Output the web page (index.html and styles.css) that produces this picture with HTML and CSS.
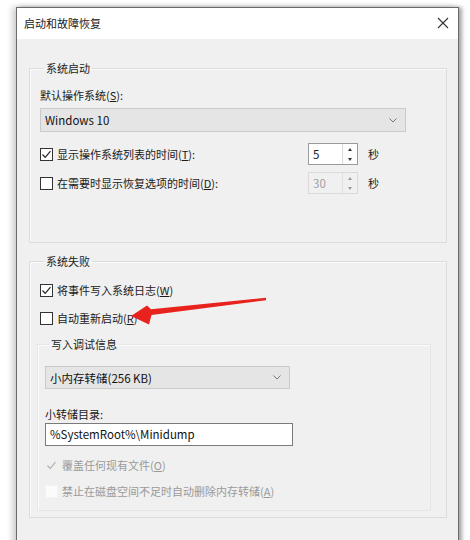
FILE: index.html
```html
<!DOCTYPE html>
<html lang="zh-CN">
<head>
<meta charset="utf-8">
<title>启动和故障恢复</title>
<link rel="stylesheet" href="styles.css">
</head>
<body>
<div class="dialog">
  <div class="titlebar">
    <span class="title">启动和故障恢复</span>
    <svg class="close" width="12" height="12" viewBox="0 0 12 12"><path d="M1 1L11 11M11 1L1 11" stroke="#333" stroke-width="1.1" fill="none"/></svg>
  </div>
  <div class="content">
    <fieldset class="group g1">
      <legend>系统启动</legend>
      <div class="label first">默认操作系统(<u>S</u>):</div>
      <div class="combo wide"><span>Windows 10</span><svg class="chev" width="8" height="5" viewBox="0 0 8 5"><path d="M0.5 0.5L4 4L7.5 0.5" stroke="#777" fill="none"/></svg></div>
      <div class="row r1">
        <label class="check"><span class="box checked"><svg width="11" height="11" viewBox="0 0 11 11"><path d="M1.5 5.5L4.2 8.3L9.5 2.2" stroke="#222" stroke-width="1.2" fill="none"/></svg></span>显示操作系统列表的时间(<u>T</u>):</label>
        <div class="spin"><span class="val">5</span><span class="btns"><i class="up"></i><i class="dn"></i></span></div>
        <span class="unit">秒</span>
      </div>
      <div class="row r2">
        <label class="check"><span class="box"></span>在需要时显示恢复选项的时间(<u>D</u>):</label>
        <div class="spin disabled"><span class="val">30</span><span class="btns"><i class="up"></i><i class="dn"></i></span></div>
        <span class="unit">秒</span>
      </div>
    </fieldset>

    <fieldset class="group g2">
      <legend>系统失败</legend>
      <label class="check c1"><span class="box checked"><svg width="11" height="11" viewBox="0 0 11 11"><path d="M1.5 5.5L4.2 8.3L9.5 2.2" stroke="#222" stroke-width="1.2" fill="none"/></svg></span>将事件写入系统日志(<u>W</u>)</label>
      <label class="check c2"><span class="box"></span>自动重新启动(<u>R</u>)</label>
      <fieldset class="group sub">
        <legend>写入调试信息</legend>
        <div class="combo narrow"><span>小内存转储(256 KB)</span><svg class="chev" width="8" height="5" viewBox="0 0 8 5"><path d="M0.5 0.5L4 4L7.5 0.5" stroke="#777" fill="none"/></svg></div>
        <div class="label dir">小转储目录:</div>
        <div class="input">%SystemRoot%\Minidump</div>
        <label class="check disabled c3"><span class="box checked dis"><svg width="11" height="11" viewBox="0 0 11 11"><path d="M1.5 5.5L4.2 8.3L9.5 2.2" stroke="#b0b0b0" stroke-width="1.2" fill="none"/></svg></span>覆盖任何现有文件(<u>O</u>)</label>
        <label class="check disabled c4"><span class="box dis white"></span>禁止在磁盘空间不足时自动删除内存转储(<u>A</u>)</label>
      </fieldset>
    </fieldset>

    <svg class="arrow" width="470" height="540" viewBox="0 0 470 540"><polygon points="266,295.8 151,307.2 147,303.5 131,314 149,322.5 151.5,313 266,298.2" fill="#e8231d"/></svg>
  </div>
</div>
</body>
</html>
```

FILE: styles.css
```css
html, body {
  margin: 0;
  padding: 0;
  background: #ffffff;
  overflow: hidden;
  width: 470px;
  height: 540px;
}
body {
  font-family: "Noto Sans CJK SC", "Noto Sans", sans-serif;
  font-size: 11px;
  color: #1a1a1a;
}
u { text-decoration: underline; text-underline-offset: 1px; }

.dialog {
  margin: 7px 0 0 16px;
  width: 441px;
  border: 1px solid #6b6b6b;
  border-bottom: none;
  box-shadow: -4px 0 6px rgba(0,0,0,0.18), 3px 0 4px rgba(0,0,0,0.35);
  background: #f0f0f0;
}
.titlebar {
  height: 29px;
  background: #ffffff;
  display: flex;
  align-items: center;
  justify-content: space-between;
  padding: 0 9px 2px 7px;
}
.title { font-size: 11px; color: #222; }
.close { display: block; }

.content {
  position: relative;
  padding: 22px 11px 0 12px;
  height: 510px;
  box-sizing: border-box;
}

.group {
  margin: 0;
  border: 1px solid #dcdcdc;
  box-shadow: inset 1px 1px 0 #fafafa;
  padding: 0 10px;
  min-width: 0;
}
.group legend {
  padding: 0 2px;
  margin-left: 4px;
  line-height: 14px;
  color: #222;
}
.g1 { padding-bottom: 48px; }
.label { line-height: 14px; }
.label.first { margin-top: 13px; }

.combo {
  margin-top: 6px;
  height: 24px;
  box-sizing: border-box;
  border: 1px solid #cacaca;
  background: #e5e5e5;
  display: flex;
  align-items: center;
  justify-content: space-between;
  padding: 0 8px 0 4px;
  font-size: 11.5px;
  color: #111;
}
.combo.wide { width: 366px; }

.row {
  display: flex;
  align-items: center;
  height: 22px;
}
.r1 { margin-top: 11px; }
.r2 { margin-top: 7px; }
.row .check { width: 268px; }

.check {
  display: flex;
  align-items: center;
  line-height: 14px;
}
.box {
  width: 13px;
  height: 13px;
  box-sizing: border-box;
  border: 1px solid #333;
  background: #fff;
  margin-right: 4px;
  display: flex;
  align-items: center;
  justify-content: center;
  flex: none;
}
.box.dis { border-color: transparent; background: transparent; }
.box.dis.white { background: #fbfbfb; border-color: #f4f4f4; }
.check.disabled { color: #9a9a9a; }

.spin {
  width: 50px;
  height: 22px;
  box-sizing: border-box;
  border: 1px solid #9a9a9a;
  background: #fff;
  display: flex;
  justify-content: space-between;
}
.spin .val { padding: 3px 0 0 4px; font-size: 11.5px; line-height: 14px; }
.spin .btns {
  width: 14px;
  border-left: 1px solid #dadada;
  display: flex;
  flex-direction: column;
  align-items: center;
  justify-content: space-around;
  background: #fdfdfd;
}
.spin .btns i {
  width: 0; height: 0;
  border-left: 2.5px solid transparent;
  border-right: 2.5px solid transparent;
}
.spin .btns .up { border-bottom: 3px solid #333; }
.spin .btns .dn { border-top: 3px solid #333; }
.spin.disabled { border-color: #dadada; background: #f0f0f0; color: #a0a0a0; }
.spin.disabled .btns { background: #f0f0f0; border-left-color: #e0e0e0; }
.spin.disabled .btns .up { border-bottom-color: #9a9a9a; }
.spin.disabled .btns .dn { border-top-color: #9a9a9a; }
.unit { margin-left: 10px; }

.g2 { margin-top: 11px; padding-bottom: 6px; }
.c1 { margin-top: 15px; }
.c2 { margin-top: 14px; }

.sub {
  margin: 12px 5px 0 -3px;
  padding: 0 7px 12px;
  border-color: #e6e6e6;
}
.combo.narrow { width: 245px; height: 23px; margin-top: 15px; }
.label.dir { margin-top: 18px; }
.input {
  margin-top: 2px;
  width: 248px;
  height: 23px;
  box-sizing: border-box;
  border: 1px solid #7a7a7a;
  background: #fff;
  padding: 3px 0 0 4px;
  font-size: 11.5px;
  line-height: 15px;
  color: #111;
}
.c3 { margin-top: 12px; }
.c4 { margin-top: 12px; }

.arrow {
  position: absolute;
  left: -17px;
  top: -37px;
  pointer-events: none;
}
```
